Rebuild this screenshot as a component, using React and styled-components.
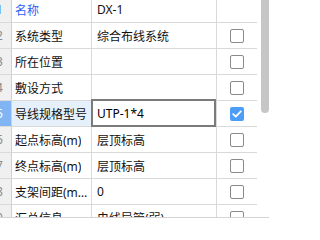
import React from 'react'
import styled, { createGlobalStyle } from 'styled-components'

const GlobalStyle = createGlobalStyle`
  html, body {
    margin: 0;
    padding: 0;
    background: #ffffff;
  }
  body {
    font-family: "Noto Sans", "Noto Sans CJK SC", sans-serif;
    font-size: 12px;
  }
`

const Panel = styled.div`
  width: 269px;
  height: 220px;
  display: flex;
  flex-direction: column;
  overflow: hidden;
  background: #ffffff;
`

const Body = styled.div`
  flex: 1;
  display: flex;
  min-height: 0;
  border-bottom: 1px solid #d4d4d4;
  margin-bottom: 2px;
`

const Viewport = styled.div`
  width: 258px;
  overflow: hidden;
`

// the list is scrolled a few pixels, so the first row is partly hidden
const Rows = styled.div`
  margin-top: -3px;
`

const Row = styled.div`
  display: grid;
  grid-template-columns: 12px 80px 125px 41px;
  height: 26px;
`

const Cell = styled.div`
  position: relative;
  box-sizing: border-box;
  display: flex;
  align-items: center;
  border-right: 1px solid #d9d9d9;
  border-bottom: 1px solid #d9d9d9;
  overflow: hidden;
  white-space: nowrap;
`

const NumCell = styled(Cell)`
  background: ${(p) => (p.$selected ? '#80b4f2' : '#f0f0f0')};
  color: ${(p) => (p.$selected ? '#ffffff' : p.$first ? '#2f62f5' : '#8a8a8a')};
  border-right-color: #d0d0d0;
  span {
    margin-left: -4px;
  }
`

const NameCell = styled(Cell)`
  padding-left: 3px;
  color: ${(p) => (p.$first ? '#2f5ff7' : '#111111')};
  background: ${(p) => (p.$selected ? '#e6f0fb' : 'transparent')};
  span {
    overflow: hidden;
    text-overflow: ellipsis;
  }
`

const ValueCell = styled(Cell)`
  padding-left: 5px;
  color: #111111;
  overflow: visible;
`

const Editor = styled.div`
  position: absolute;
  top: -2px;
  left: -1px;
  right: 0;
  bottom: -1px;
  box-sizing: border-box;
  border: 2px solid #7b7b7b;
  background: #ffffff;
  display: flex;
  align-items: center;
  padding-left: 4px;
  color: #000000;
  z-index: 1;
`

const CheckCell = styled(Cell)`
  justify-content: center;
`

const Box = styled.div`
  width: 14px;
  height: 14px;
  box-sizing: border-box;
  border-radius: 2px;
  border: ${(p) => (p.$checked ? 'none' : '1.5px solid #8a8a8a')};
  background: ${(p) => (p.$checked ? '#4b9df7' : '#ffffff')};
  display: flex;
  align-items: center;
  justify-content: center;
`

const Gutter = styled.div`
  flex: 1;
  padding-left: 4px;
`

const Thumb = styled.div`
  width: 8px;
  height: 113px;
  background: #c6c6c6;
  border-radius: 0 0 4px 4px;
`

const rows = [
  { name: '名称', value: 'DX-1', noCheck: true },
  { name: '系统类型', value: '综合布线系统' },
  { name: '所在位置', value: '' },
  { name: '敷设方式', value: '' },
  { name: '导线规格型号', value: 'UTP-1*4', editing: true, checked: true },
  { name: '起点标高(m)', value: '层顶标高' },
  { name: '终点标高(m)', value: '层顶标高' },
  { name: '支架间距(mm)', value: '0' },
  { name: '汇总信息', value: '电线导管(弱)' }
]

const Check = () => (
  <svg width="10" height="8" viewBox="0 0 10 8">
    <path d="M1.2 4.2 L3.8 6.6 L8.8 1.4" fill="none" stroke="#ffffff" strokeWidth="1.8" strokeLinecap="round" strokeLinejoin="round" />
  </svg>
)

const App = () => (
  <>
    <GlobalStyle />
    <Panel>
      <Body>
        <Viewport>
          <Rows>
            {rows.map((r, i) => (
              <Row key={r.name}>
                <NumCell $selected={r.editing} $first={i === 0}>
                  <span>{i + 1}</span>
                </NumCell>
                <NameCell $selected={r.editing} $first={i === 0}>
                  <span>{r.name}</span>
                </NameCell>
                <ValueCell>
                  {r.editing ? <Editor>{r.value}</Editor> : r.value}
                </ValueCell>
                <CheckCell>
                  {!r.noCheck && (
                    <Box $checked={r.checked}>{r.checked && <Check />}</Box>
                  )}
                </CheckCell>
              </Row>
            ))}
          </Rows>
        </Viewport>
        <Gutter>
          <Thumb />
        </Gutter>
      </Body>
    </Panel>
  </>
)

export default App
